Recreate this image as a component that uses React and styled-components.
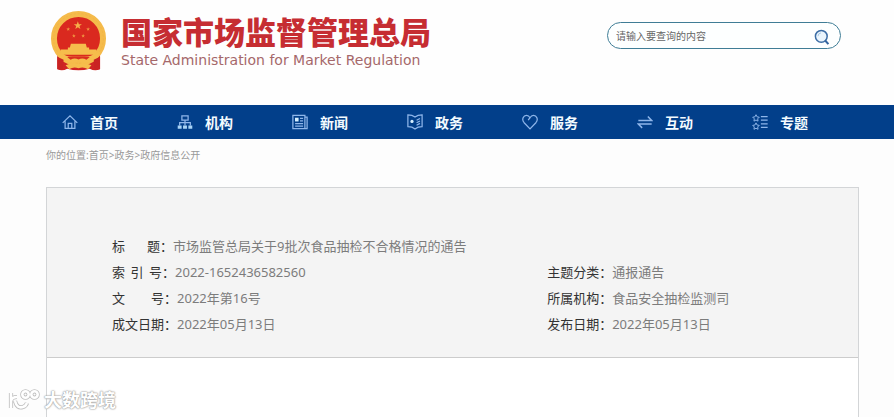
import React from 'react'
import styled, { createGlobalStyle } from 'styled-components'

const GlobalStyle = createGlobalStyle`
* {
  box-sizing: border-box;
}
body {
  margin: 0;
  background: #fdfdfd;
  font-family: "Noto Sans", "Noto Sans CJK SC", sans-serif;
}
`
const Page = styled.div`
display: flex;
flex-direction: column;
min-height: 100vh;
`
const Header = styled.header`
display: flex;
justify-content: space-between;
align-items: flex-start;
height: 105px;
padding: 11px 53px 0 50px;
background: #fefefe;
`
const Brand = styled.a`
display: flex;
gap: 14px;
text-decoration: none;
`
const BrandText = styled.div`
display: flex;
flex-direction: column;
`
const BrandName = styled.h1`
margin: 0;
color: #c62d32;
font-family: "Noto Sans CJK SC", sans-serif;
font-size: 31px;
font-weight: 900;
line-height: 40px;
white-space: nowrap;
`
const BrandSub = styled.p`
margin: 0;
color: #a5686a;
font-family: "DejaVu Sans", sans-serif;
font-size: 14px;
line-height: 18px;
white-space: nowrap;
`
const Search = styled.form`
display: flex;
align-items: center;
width: 234px;
height: 27px;
margin-top: 11px;
padding: 0 10px 0 8px;
border: 1px solid #3f7d96;
border-radius: 14px;
background: #fdffff;
`
const SearchInput = styled.input`
flex: 1;
min-width: 0;
padding: 0;
border: 0;
outline: 0;
background: none;
font-family: inherit;
font-size: 10px;
color: #555;
&::placeholder {
  color: #666;
  opacity: 1;
}
`
const SearchButton = styled.button`
display: flex;
padding: 3px 0 0;
border: 0;
background: none;
cursor: pointer;
`
const Nav = styled.nav`
display: flex;
height: 34px;
padding-left: 62px;
background: #023f8a;
`
const NavLink = styled.a`
display: flex;
flex: 0 1 115px;
align-items: center;
gap: 12px;
color: #f4fbff;
font-size: 14px;
font-weight: 700;
text-decoration: none;
white-space: nowrap;
`
const NavIcon = styled.svg`
width: 16px;
height: 16px;
flex: none;
fill: none;
stroke: #8fb6ea;
stroke-width: 1.4;
`
const Crumbs = styled.nav`
padding: 8px 46px 24px;
color: #999;
font-size: 10px;
line-height: 16px;
`
const CrumbLink = styled.a`
color: inherit;
text-decoration: none;
`
const Article = styled.main`
flex: 1;
margin: 0 35px 0 46px;
border: 1px solid #d3d5d7;
border-bottom: 0;
background: #fff;
`
const Info = styled.dl`
display: grid;
grid-template-columns: 7fr 5fr;
margin: 0;
padding: 45px 0 20px 65px;
border-bottom: 1px solid #ccc;
background: #f4f4f4;
font-size: 13px;
line-height: 26px;
`
const InfoItem = styled.div`
display: flex;
grid-column: ${(props) => (props.$wide ? '1 / -1' : 'auto')};
white-space: nowrap;
`
const Term = styled.dt`
display: flex;
color: #333;
`
const TermName = styled.span`
display: flex;
justify-content: space-between;
width: ${(props) => props.$width}px;
`
const Value = styled.dd`
margin: 0;
color: #7c7c7c;
`
const Watermark = styled.div`
position: absolute;
left: 8px;
bottom: 5px;
display: flex;
align-items: center;
gap: 3px;
color: #fff;
font-size: 18px;
font-weight: 700;
line-height: 24px;
text-shadow: 0 0 1px #999, 0 0 2px #aaa, 0 0 2px #bbb;
`

const STAR = '0,-10 2.4,-3.2 9.5,-3.1 3.8,1.2 5.9,8.1 0,4 -5.9,8.1 -3.8,1.2 -9.5,-3.1 -2.4,-3.2'

const Emblem = () => (
  <svg width="57" height="60" viewBox="0 -4 168 181" aria-hidden="true">
    <path d="M20 125 L20 172 Q36 178 50 170 Q84 180 118 170 Q132 178 149 172 L149 125 Z" fill="#cf2424" />
    <circle cx="84" cy="79" r="74" fill="#da291f" stroke="#f5bb4b" strokeWidth="18" />
    <circle cx="84" cy="79" r="75" fill="none" stroke="#f1b142" strokeWidth="2" strokeDasharray="7 5" />
    <polygon points={STAR} transform="translate(82 40) scale(1.3)" fill="#f6b04a" />
    <polygon points={STAR} transform="translate(53 51) scale(.6)" fill="#f09440" />
    <polygon points={STAR} transform="translate(113 51) scale(.6)" fill="#f09440" />
    <polygon points={STAR} transform="translate(70 71) scale(.6)" fill="#f09440" />
    <polygon points={STAR} transform="translate(98 71) scale(.6)" fill="#f09440" />
    <path d="M61 95 H106 L109 106 H116 V112 H138 V128 H30 V112 H52 V106 H58 Z" fill="#f6bd4c" />
    <path d="M20 118 Q45 134 66 134 H102 Q123 134 148 118 L140 138 L118 149 Q98 158 84 146 Q70 158 50 149 L28 138 Z" fill="#f6bd4c" />
    <path d="M50 135 H118 L108 143 Q96 136 84 142 Q72 136 60 143 Z" fill="#d92e20" />
    <path d="M20 134 L39 143 L36 174 L20 171 Z M149 134 L130 143 L133 174 L149 171 Z" fill="#c92323" />
    <path d="M45 160 Q67 149 84 157 Q101 149 123 160 L113 172 Q99 163 84 169 Q69 163 56 172 Z" fill="#f6bd4c" />
  </svg>
)

const SearchIcon = () => (
  <svg width="16" height="17" viewBox="0 0 16 17" fill="none" aria-hidden="true">
    <circle cx="7.3" cy="7.3" r="5.9" fill="#eaf5fd" stroke="#3c6da5" strokeWidth="1.5" />
    <path d="M4 7.2a3.4 3.4 0 0 1 3-3.3" stroke="#a8c9e4" />
    <path d="M11.2 11.5 L14.4 15.2" stroke="#3566a0" strokeWidth="2" />
  </svg>
)

const menu = [
  {
    name: '首页',
    icon: <path d="M.8 10 L9 2 L17.2 10 M3.5 8.2 V16.3 H14.5 V8.2 M7 16 V10.5 H11 V16" />,
  },
  {
    name: '机构',
    icon: (
      <>
        <path d="M5.5 2 H12.5 V7 H5.5 Z M9 7 V13 M3 13 V9.8 H15 V13" />
        <path d="M.8 13 H5.2 V16.6 H.8 Z M6.8 13 H11.2 V16.6 H6.8 Z M12.8 13 H17.2 V16.6 H12.8 Z" fill="#a9d4f5" stroke="none" />
      </>
    ),
  },
  {
    name: '新闻',
    icon: (
      <>
        <path d="M1 1.5 H14.5 V16.5 H1 Z M14.5 3.5 H17 V16.5 H14.5 M9 5 H12.5 M9 7.8 H12.5 M3.5 10.8 H12.5 M3.5 13.6 H12.5" />
        <path d="M3.4 4.2 H7.4 V8.4 H3.4 Z" fill="#d5efff" stroke="none" />
      </>
    ),
  },
  {
    name: '政务',
    icon: (
      <>
        <path d="M1 1 Q6 1 9 3.4 Q12 1 17 1 V14.2 Q12 14.2 9 16.8 Q6 14.2 1 14.2 Z M10.8 7 L14.6 5 M10.8 9.8 L14.6 7.8 M10.8 12.6 L14.6 10.6" />
        <circle cx="5.6" cy="8.4" r="1.8" fill="#d5efff" stroke="none" />
      </>
    ),
  },
  {
    name: '服务',
    icon: <path d="M9 16.8 L2.4 9.8 C-.8 6 1.6 1.6 5.1 1.6 C7.1 1.6 8.2 2.8 9 4.2 C9.8 2.8 10.9 1.6 12.9 1.6 C16.4 1.6 18.8 6 15.6 9.8 Z M9 4.2 L7 7" />,
  },
  {
    name: '互动',
    icon: <path d="M1.5 7.2 H16.5 L12.2 2.8 M16.5 11.2 H1.5 L5.8 15.6" strokeWidth="1.7" />,
  },
  {
    name: '专题',
    icon: (
      <>
        <polygon points="4.5,.8 5.7,3.2 8.2,3.6 6.4,5.4 6.8,8 4.5,6.8 2.2,8 2.6,5.4 .8,3.6 3.3,3.2" strokeWidth="1.1" />
        <polygon points="4.5,10 5.7,12.4 8.2,12.8 6.4,14.6 6.8,17.2 4.5,16 2.2,17.2 2.6,14.6 .8,12.8 3.3,12.4" strokeWidth="1.1" />
        <path d="M10 3 H17.6 M10 7 H17.6 M10 11 H17.6 M10 15 H17.6" />
      </>
    ),
  },
]

const info = [
  { name: '标题', width: 48, value: '市场监管总局关于9批次食品抽检不合格情况的通告', wide: true },
  { name: '索引号', width: 50, value: '2022-1652436582560' },
  { name: '主题分类', width: 52, value: '通报通告' },
  { name: '文号', width: 52, value: '2022年第16号' },
  { name: '所属机构', width: 52, value: '食品安全抽检监测司' },
  { name: '成文日期', width: 52, value: '2022年05月13日' },
  { name: '发布日期', width: 52, value: '2022年05月13日' },
]

export default function App() {
  return (
    <Page lang="zh-CN">
      <GlobalStyle />
      <Header>
        <Brand href="#">
          <Emblem />
          <BrandText>
            <BrandName>国家市场监督管理总局</BrandName>
            <BrandSub>State Administration for Market Regulation</BrandSub>
          </BrandText>
        </Brand>
        <Search role="search" onSubmit={(e) => e.preventDefault()}>
          <SearchInput type="text" aria-label="请输入要查询的内容" placeholder="请输入要查询的内容" />
          <SearchButton type="submit" aria-label="查询">
            <SearchIcon />
          </SearchButton>
        </Search>
      </Header>
      <Nav>
        {menu.map((item) => (
          <NavLink href="#" key={item.name}>
            <NavIcon viewBox="0 0 18 18" aria-hidden="true">{item.icon}</NavIcon>
            {item.name}
          </NavLink>
        ))}
      </Nav>
      <Crumbs>
        你的位置:<CrumbLink href="#">首页</CrumbLink>&gt;<CrumbLink href="#">政务</CrumbLink>&gt;<CrumbLink href="#">政府信息公开</CrumbLink>
      </Crumbs>
      <Article>
        <Info>
          {info.map((item) => (
            <InfoItem key={item.name} $wide={item.wide}>
              <Term>
                <TermName $width={item.width}>
                  {item.name.split('').map((char) => <span key={char}>{char}</span>)}
                </TermName>
                ：
              </Term>
              <Value>{item.value}</Value>
            </InfoItem>
          ))}
        </Info>
      </Article>
      <Watermark>
        <svg width="33" height="22" viewBox="0 0 33 22" fill="none" aria-hidden="true">
          <g stroke="#bdbdbd" strokeWidth="4.2">
            <path d="M3 4 V19 M3 12 Q4 8 9 8 M7 12 Q9 20 15 18 Q18 17 19 14" />
            <circle cx="17.5" cy="5.5" r="3.2" />
            <circle cx="26.5" cy="5.5" r="3.2" />
          </g>
          <g stroke="#fff" strokeWidth="2.6">
            <path d="M3 4 V19 M3 12 Q4 8 9 8 M7 12 Q9 20 15 18 Q18 17 19 14" />
            <circle cx="17.5" cy="5.5" r="3.2" />
            <circle cx="26.5" cy="5.5" r="3.2" />
          </g>
        </svg>
        大数跨境
      </Watermark>
    </Page>
  )
}
